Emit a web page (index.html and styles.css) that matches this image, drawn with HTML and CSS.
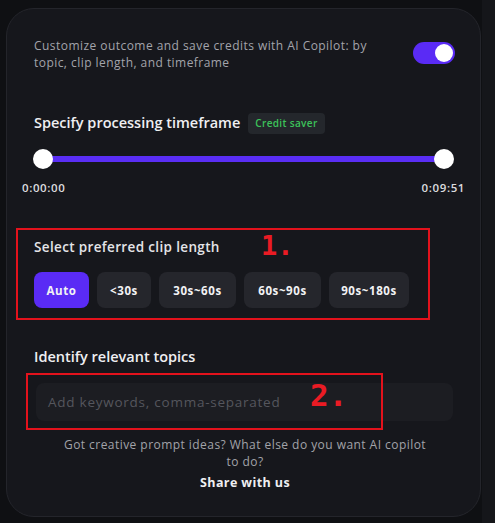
FILE: index.html
```html
<!DOCTYPE html>
<html>
<head>
<meta charset="utf-8">
<link rel="stylesheet" href="styles.css">
</head>
<body>
<div class="stage">
  <div class="card">
    <div class="intro">
      <p class="desc">Customize outcome and save credits with AI Copilot: by topic, clip length, and timeframe</p>
      <div class="toggle"><span class="knob"></span></div>
    </div>

    <div class="section timeframe">
      <div class="title-row">
        <h2 class="title">Specify processing timeframe</h2>
        <span class="badge">Credit saver</span>
      </div>
      <div class="slider">
        <span class="thumb"></span>
        <span class="track"></span>
        <span class="thumb"></span>
      </div>
      <div class="times"><span>0:00:00</span><span>0:09:51</span></div>
    </div>

    <div class="section clip">
      <h2 class="title small">Select preferred clip length</h2>
      <div class="chips">
        <button class="chip active">Auto</button>
        <button class="chip">&lt;30s</button>
        <button class="chip">30s~60s</button>
        <button class="chip">60s~90s</button>
        <button class="chip">90s~180s</button>
      </div>
      <div class="anno anno1"><span class="num">1.</span></div>
    </div>

    <div class="section topics">
      <h2 class="title">Identify relevant topics</h2>
      <div class="input">Add keywords, comma-separated</div>
      <div class="anno anno2"><span class="num">2.</span></div>
    </div>

    <div class="footer">
      <p class="hint">Got creative prompt ideas? What else do you want AI copilot to do?</p>
      <p class="share">Share with us</p>
    </div>
  </div>
</div>
</body>
</html>
```

FILE: styles.css
```css
* { box-sizing: border-box; }
html, body { margin: 0; padding: 0; }
body {
  background: #0f1013;
  font-family: "Open Sans", "Inter", sans-serif;
  width: 495px;
  height: 523px;
  overflow: hidden;
}
.stage {
  padding: 8px 14px 6px 6px;
  height: 523px;
  background: linear-gradient(to right, #0f1013 0, #0f1013 482px, #15161a 482px);
}
.card {
  position: relative;
  width: 475px;
  height: 509px;
  background: #16171c;
  border: 1px solid #24252b;
  border-radius: 28px;
  padding: 28px 26px 0 27px;
}
.intro {
  display: flex;
  justify-content: space-between;
  align-items: flex-start;
}
.desc {
  margin: 0;
  width: 360px;
  font-size: 12px;
  letter-spacing: 0.45px;
  line-height: 17px;
  color: #a3a4ab;
  font-weight: 500;
}
.toggle {
  width: 42px;
  height: 22px;
  border-radius: 11px;
  background: #5a2bf5;
  margin-top: 5px;
  margin-right: -1px;
  display: flex;
  align-items: center;
  justify-content: flex-end;
  padding-right: 2px;
}
.knob {
  width: 18px; height: 18px; border-radius: 50%;
  background: #fff;
}
.section { position: relative; }
.timeframe { margin-top: 41px; }
.title-row { display: flex; align-items: center; gap: 8px; }
.title {
  margin: 0;
  font-size: 14.5px;
  font-weight: 600;
  color: #efeff2;
  line-height: 22px;
}
.title.small { font-size: 13.5px; color: #e4e4e8; letter-spacing: 0.35px; }
.badge {
  background: #24272c;
  color: #3cc35a;
  font-size: 10px;
  font-weight: 600;
  letter-spacing: 0.35px;
  padding: 3px 7px;
  border-radius: 4px;
  line-height: 15px;
}
.slider {
  display: flex;
  align-items: center;
  margin: 15px 0 0 -1px;
  width: 421px;
}
.thumb {
  width: 20px; height: 20px; border-radius: 50%;
  background: #fff;
  flex: none;
  position: relative;
  z-index: 1;
}
.track {
  flex: 1;
  height: 6px;
  background: #5a2ef5;
  margin: 0 -6px;
}
.times {
  display: flex;
  justify-content: space-between;
  margin: 12px -11px 0 -12px;
  font-size: 11.5px;
  letter-spacing: 0.6px;
  font-weight: 600;
  color: #dcdcdf;
  line-height: 14px;
}
.clip { margin-top: 41px; }
.chips { display: flex; gap: 8px; margin-top: 14px; }
.chip {
  border: none;
  height: 36px;
  border-radius: 8px;
  background: #25262c;
  color: #f2f2f4;
  font-family: inherit;
  font-size: 11.5px;
  letter-spacing: 0.6px;
  font-weight: 700;
  padding: 0;
}
.chip:nth-child(1) { width: 55px; }
.chip:nth-child(2) { width: 54px; }
.chip:nth-child(3) { width: 77px; }
.chip:nth-child(4) { width: 77px; }
.chip:nth-child(5) { width: 80px; }
.chip.active { background: #5a2bf5; }
.anno {
  position: absolute;
  border: 2px solid #e3121c;
}
.anno1 { left: -18px; top: -8px; width: 414px; height: 92px; }
.anno2 { left: -8px; top: 27px; width: 357px; height: 57px; }
.num {
  position: absolute;
  color: #ea1b24;
  font-family: "DejaVu Sans Mono", monospace;
  font-weight: 700;
}
.anno1 .num { left: 243px; top: 0px; font-size: 27px; }
.anno2 .num { left: 282px; top: 2px; font-size: 31px; }
.topics { margin-top: 38px; }
.input {
  margin: 15px 1px 0 2px;
  height: 38px;
  border-radius: 8px;
  background: #1c1d22;
  color: #55565d;
  font-size: 13.5px;
  letter-spacing: 0.75px;
  line-height: 38px;
  padding-left: 12px;
}
.footer { text-align: center; margin-top: 15px; padding: 0 22px 0 24px; }
.hint {
  margin: 0;
  font-size: 12px;
  letter-spacing: 0.45px;
  line-height: 17px;
  color: #a2a3a9;
  font-weight: 500;
}
.share {
  margin: 4px 0 0;
  font-size: 12.5px;
  letter-spacing: 0.4px;
  font-weight: 700;
  color: #efeff2;
}
```
